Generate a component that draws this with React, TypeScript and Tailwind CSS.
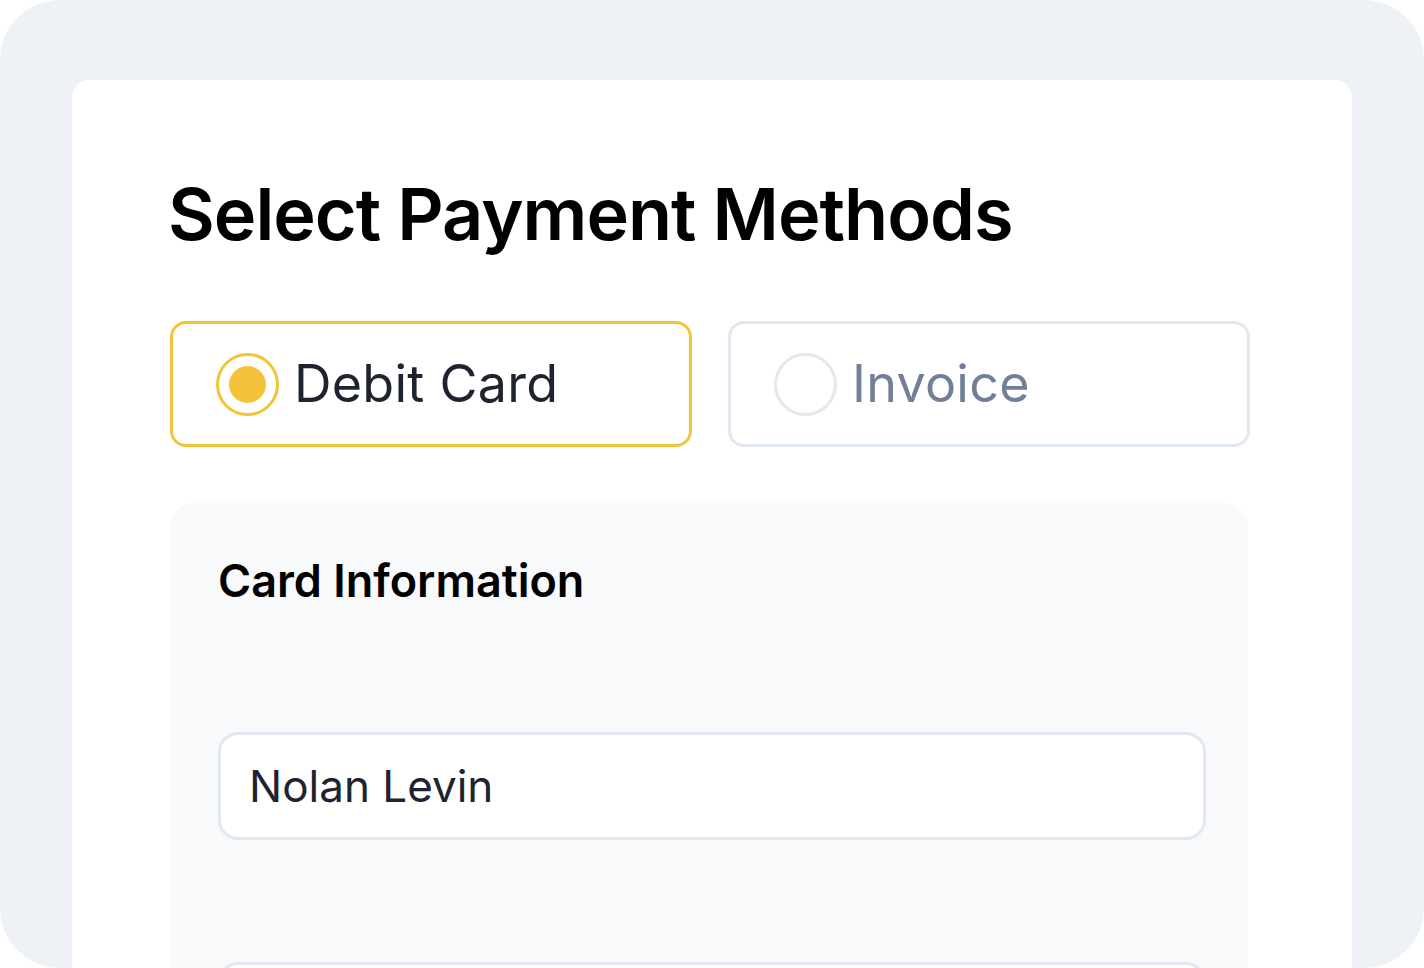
export default function App() {
  return (
    <div className="h-[968px] w-[1424px] overflow-hidden bg-white font-['Inter',sans-serif]">
      <div className="flex h-full w-full flex-col rounded-[60px] bg-[#eef2f6] px-[72px] pt-[80px]">
        <div className="flex flex-1 flex-col rounded-t-[18px] bg-white pl-[98px] pr-[102px] pt-[96px]">
          <h1 className="-ml-[2px] text-[72px] font-semibold leading-[76px] tracking-[-0.014em] text-black">
            Select Payment Methods
          </h1>

          <div className="mt-[69px] grid grid-cols-2 gap-[36px]">
            <PayOption label="Debit Card" selected />
            <PayOption label="Invoice" />
          </div>

          <div className="mr-[2px] mt-[56px] flex flex-1 flex-col rounded-t-[24px] bg-[#f7f9fb] pl-[48px] pr-[42px] pt-[50px]">
            <h2 className="text-[45px] font-semibold leading-[56px] text-black">Card Information</h2>

            <div className="mt-[123px] flex h-[108px] items-center rounded-[20px] border-[3px] border-[#e2e8f0] bg-white px-[28px]">
              <span className="text-[44px] text-[#1e2330]">Nolan Levin</span>
            </div>

            <div className="mt-[122px] h-[108px] rounded-[20px] border-[3px] border-[#e2e8f0] bg-white" />
          </div>
        </div>
      </div>
    </div>
  )
}

function PayOption({ label, selected = false }: { label: string; selected?: boolean }) {
  return (
    <div
      className={
        selected
          ? "flex h-[126px] items-center gap-[15px] rounded-[16px] border-[3px] border-[#f3c43a] bg-white pl-[43px]"
          : "flex h-[126px] items-center gap-[15px] rounded-[16px] border-[3px] border-[#e2e8f0] bg-white pl-[43px]"
      }
    >
      {selected ? (
        <span className="flex h-[63px] w-[63px] items-center justify-center rounded-full border-[3px] border-[#f3c43a]">
          <span className="h-[37px] w-[37px] rounded-full bg-[#f3c43a]" />
        </span>
      ) : (
        <span className="h-[63px] w-[63px] rounded-full border-[3px] border-[#e2e8f0]" />
      )}
      <span
        className={
          selected
            ? "text-[52px] tracking-[0.005em] text-[#1e2330]"
            : "text-[52px] tracking-[0.005em] text-[#718096]"
        }
      >
        {label}
      </span>
    </div>
  )
}
